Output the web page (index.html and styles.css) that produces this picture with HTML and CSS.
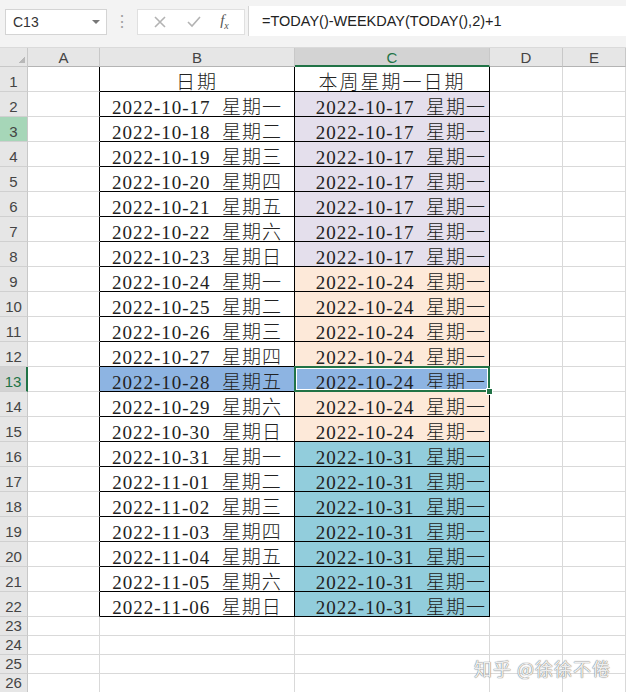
FILE: index.html
```html
<!DOCTYPE html>
<html>
	<head>
		<meta charset="UTF-8">
		<title>本周星期一日期</title>
		<link rel="stylesheet" href="styles.css">
	</head>
	<body>
		<div class="bar">
			<div class="name_box">
				<span>C13</span>
				<span class="drop"></span>
			</div>
			<div class="dots">⋮</div>
			<div class="btn_box">
				<svg width="14" height="14" viewBox="0 0 14 14"><path d="M2 2 L12 12 M12 2 L2 12" stroke="#b3b3b3" stroke-width="1.6" fill="none"/></svg>
				<svg width="16" height="14" viewBox="0 0 16 14"><path d="M2 7 L6 11 L14 2" stroke="#b3b3b3" stroke-width="1.6" fill="none"/></svg>
				<span class="fx"><i>f</i><sub>x</sub></span>
			</div>
			<div class="formula">=TODAY()-WEEKDAY(TODAY(),2)+1</div>
		</div>
		<div class="sheet">
			<div class="corner"></div>
			<div class="ch">A</div>
			<div class="ch">B</div>
			<div class="ch sel_col">C</div>
			<div class="ch">D</div>
			<div class="ch">E</div>

			<div class="rh">1</div><div class="c edge"></div><div class="c t head">日期</div><div class="c t head">本周星期一日期</div><div class="c"></div><div class="c"></div>
			<div class="rh">2</div><div class="c edge"></div><div class="c t">2022-10-17  星期一</div><div class="c t r lav">2022-10-17  星期一</div><div class="c"></div><div class="c"></div>
			<div class="rh mark">3</div><div class="c edge"></div><div class="c t">2022-10-18  星期二</div><div class="c t r lav">2022-10-17  星期一</div><div class="c"></div><div class="c"></div>
			<div class="rh">4</div><div class="c edge"></div><div class="c t">2022-10-19  星期三</div><div class="c t r lav">2022-10-17  星期一</div><div class="c"></div><div class="c"></div>
			<div class="rh">5</div><div class="c edge"></div><div class="c t">2022-10-20  星期四</div><div class="c t r lav">2022-10-17  星期一</div><div class="c"></div><div class="c"></div>
			<div class="rh">6</div><div class="c edge"></div><div class="c t">2022-10-21  星期五</div><div class="c t r lav">2022-10-17  星期一</div><div class="c"></div><div class="c"></div>
			<div class="rh">7</div><div class="c edge"></div><div class="c t">2022-10-22  星期六</div><div class="c t r lav">2022-10-17  星期一</div><div class="c"></div><div class="c"></div>
			<div class="rh">8</div><div class="c edge"></div><div class="c t">2022-10-23  星期日</div><div class="c t r lav">2022-10-17  星期一</div><div class="c"></div><div class="c"></div>
			<div class="rh">9</div><div class="c edge"></div><div class="c t">2022-10-24  星期一</div><div class="c t r peach">2022-10-24  星期一</div><div class="c"></div><div class="c"></div>
			<div class="rh">10</div><div class="c edge"></div><div class="c t">2022-10-25  星期二</div><div class="c t r peach">2022-10-24  星期一</div><div class="c"></div><div class="c"></div>
			<div class="rh">11</div><div class="c edge"></div><div class="c t">2022-10-26  星期三</div><div class="c t r peach">2022-10-24  星期一</div><div class="c"></div><div class="c"></div>
			<div class="rh">12</div><div class="c edge"></div><div class="c t">2022-10-27  星期四</div><div class="c t r peach">2022-10-24  星期一</div><div class="c"></div><div class="c"></div>
			<div class="rh sel_row">13</div><div class="c edge"></div><div class="c t blue">2022-10-28  星期五</div><div class="c t r blue active">2022-10-24  星期一</div><div class="c"></div><div class="c"></div>
			<div class="rh">14</div><div class="c edge"></div><div class="c t">2022-10-29  星期六</div><div class="c t r peach">2022-10-24  星期一</div><div class="c"></div><div class="c"></div>
			<div class="rh">15</div><div class="c edge"></div><div class="c t">2022-10-30  星期日</div><div class="c t r peach">2022-10-24  星期一</div><div class="c"></div><div class="c"></div>
			<div class="rh">16</div><div class="c edge"></div><div class="c t">2022-10-31  星期一</div><div class="c t r teal">2022-10-31  星期一</div><div class="c"></div><div class="c"></div>
			<div class="rh">17</div><div class="c edge"></div><div class="c t">2022-11-01  星期二</div><div class="c t r teal">2022-10-31  星期一</div><div class="c"></div><div class="c"></div>
			<div class="rh">18</div><div class="c edge"></div><div class="c t">2022-11-02  星期三</div><div class="c t r teal">2022-10-31  星期一</div><div class="c"></div><div class="c"></div>
			<div class="rh">19</div><div class="c edge"></div><div class="c t">2022-11-03  星期四</div><div class="c t r teal">2022-10-31  星期一</div><div class="c"></div><div class="c"></div>
			<div class="rh">20</div><div class="c edge"></div><div class="c t">2022-11-04  星期五</div><div class="c t r teal">2022-10-31  星期一</div><div class="c"></div><div class="c"></div>
			<div class="rh">21</div><div class="c edge"></div><div class="c t">2022-11-05  星期六</div><div class="c t r teal">2022-10-31  星期一</div><div class="c"></div><div class="c"></div>
			<div class="rh">22</div><div class="c edge"></div><div class="c t">2022-11-06  星期日</div><div class="c t r teal">2022-10-31  星期一</div><div class="c"></div><div class="c"></div>
			<div class="rh">23</div><div class="c"></div><div class="c"></div><div class="c"></div><div class="c"></div><div class="c"></div>
			<div class="rh">24</div><div class="c"></div><div class="c"></div><div class="c"></div><div class="c"></div><div class="c"></div>
			<div class="rh">25</div><div class="c"></div><div class="c"></div><div class="c"></div><div class="c"></div><div class="c"></div>
			<div class="rh">26</div><div class="c"></div><div class="c"></div><div class="c"></div><div class="c"></div><div class="c"></div>
		</div>
		<div class="mark_text">知乎 @徐徐不倦</div>
	</body>
</html>
```

FILE: styles.css
```css
html,body{margin: 0; padding: 0;}
body{
	width: 626px;
	height: 692px;
	overflow: hidden;
	background: #f3f3f3;
	font-family: "Liberation Sans", Arial, sans-serif;
	position: relative;
}
.bar{
	height: 48px;
	display: flex;
	align-items: center;
	padding-left: 5px;
	box-sizing: border-box;
	border-bottom: 1px solid #dadada;
	background: #f3f3f3;
}
.name_box{
	width: 102px;
	height: 26px;
	box-sizing: border-box;
	background: #fff;
	border: 1px solid #d4d4d4;
	display: flex;
	align-items: center;
	justify-content: space-between;
	padding: 0 6px 0 7px;
	font-size: 14px;
	color: #333;
	margin-top: -4px;
}
.drop{
	width: 0;
	height: 0;
	border-left: 4px solid transparent;
	border-right: 4px solid transparent;
	border-top: 4px solid #777;
}
.dots{
	width: 30px;
	text-align: center;
	color: #a0a0a0;
	font-size: 16px;
	margin-top: -4px;
}
.btn_box{
	width: 108px;
	height: 26px;
	box-sizing: border-box;
	background: #fff;
	border: 1px solid #e0e0e0;
	display: flex;
	align-items: center;
	justify-content: space-around;
	padding: 0 6px;
	margin-top: -4px;
}
.fx{
	font-family: "Liberation Serif", serif;
	color: #555;
	font-size: 15px;
}
.fx sub{font-size: 10px; font-style: italic;}
.formula{
	flex: 1;
	height: 30px;
	margin-left: 3px;
	background: #fff;
	border-left: 1px solid #d4d4d4;
	box-sizing: border-box;
	padding-left: 13px;
	display: flex;
	align-items: center;
	font-size: 14.5px;
	color: #222;
	margin-top: -6px;
}
.sheet{
	display: grid;
	grid-template-columns: 28px 72px 195px 195px 73px 63px;
	grid-template-rows: 19px repeat(22, 25px) repeat(4, 19px);
	background: #fff;
}
.corner{
	background: #e6e6e6 linear-gradient(135deg, transparent 70%, #b8b8b8 70%) no-repeat 15px 5px / 10px 10px;
	border-right: 1px solid #c8c8c8;
	border-bottom: 1px solid #c8c8c8;
}
.ch{
	background: #e6e6e6;
	border-right: 1px solid #c8c8c8;
	border-bottom: 1px solid #b4b4b4;
	box-sizing: border-box;
	text-align: center;
	font-size: 15px;
	line-height: 19px;
	color: #444;
}
.sel_col{
	background: #d3d3d3;
	border-bottom: 2px solid #217346;
	color: #217346;
}
.rh{
	background: #e6e6e6;
	border-right: 1px solid #c8c8c8;
	border-bottom: 1px solid #d0d0d0;
	box-sizing: border-box;
	font-size: 15px;
	color: #444;
	display: flex;
	align-items: flex-end;
	justify-content: center;
	padding-bottom: 1px;
}
.rh.mark{
	background: #a6d6b8;
}
.sel_row{
	background: #d3d3d3;
	border-right: 2px solid #217346;
	color: #217346;
}
.c{
	border-right: 1px solid #d9d9d9;
	border-bottom: 1px solid #d9d9d9;
	box-sizing: border-box;
}
.edge{
	border-right: 1px solid #000;
}
.t{
	border-right: 1px solid #000;
	border-bottom: 1px solid #000;
	display: flex;
	align-items: center;
	justify-content: center;
	padding-top: 2px;
	font-family: "Liberation Serif", "Noto Sans CJK SC", serif;
	font-weight: 300;
	font-size: 19px;
	letter-spacing: 1px;
	color: #222;
	white-space: pre;
}
.t.r{
	justify-content: flex-end;
	padding-right: 3px;
}
.head{
	letter-spacing: 2px;
}
.lav{background: #e4dfec;}
.peach{background: #fde9d9;}
.teal{background: #92cddc;}
.blue{background: #8db4e2;}
.active{
	position: relative;
}
.active::after{
	content: "";
	position: absolute;
	left: -1px;
	top: -1px;
	right: -1px;
	bottom: -1px;
	border: 2px solid #217346;
	box-shadow: inset 0 0 0 1px #fff;
}
.active::before{
	content: "";
	position: absolute;
	right: -4px;
	bottom: -4px;
	width: 5px;
	height: 5px;
	background: #217346;
	border: 1px solid #fff;
	z-index: 2;
}
.mark_text{
	position: absolute;
	left: 474px;
	top: 655px;
	font-family: "Noto Sans CJK SC", sans-serif;
	font-size: 18px;
	color: rgba(255,255,255,0.9);
	text-shadow: 0 0 1px #777, 0 0 1px #777;
	letter-spacing: 1px;
}
```
